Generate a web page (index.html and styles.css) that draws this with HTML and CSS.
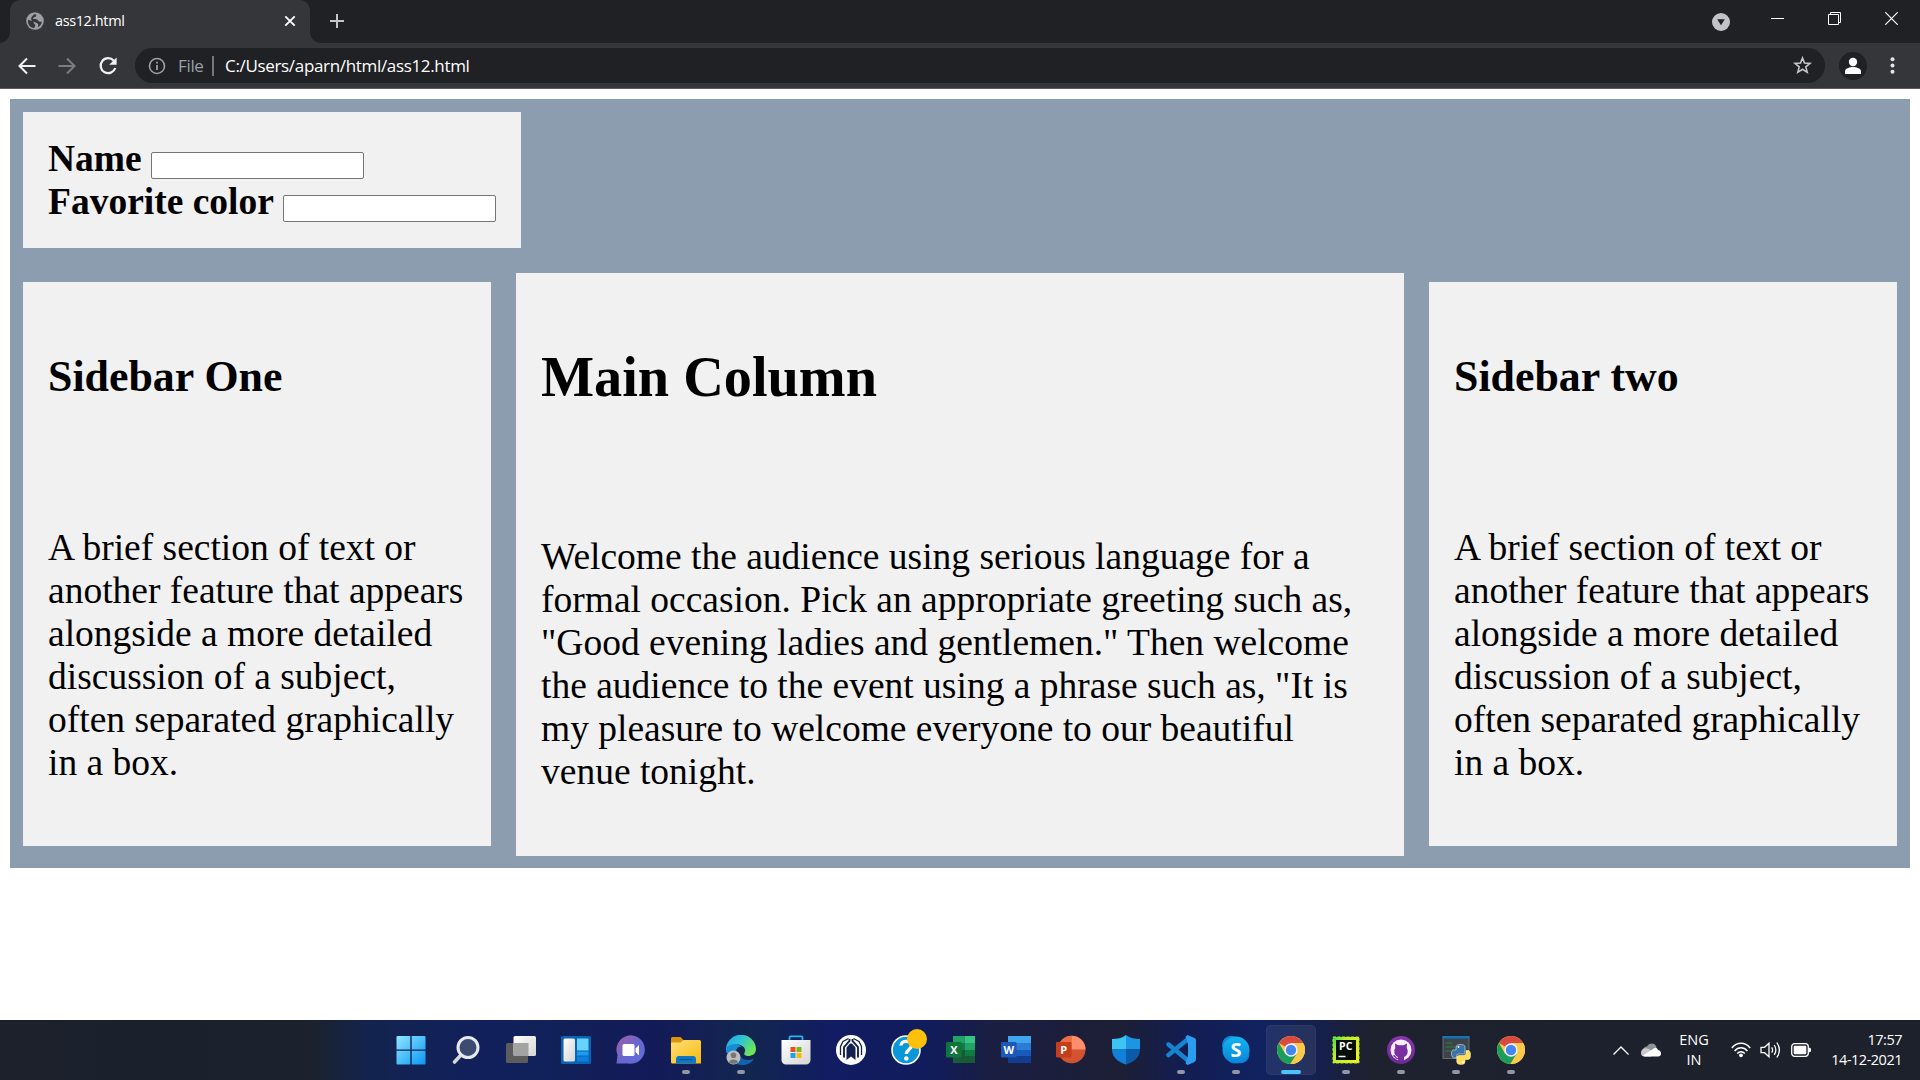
FILE: index.html
```html
<!DOCTYPE html>
<html lang="en">
<head>
<meta charset="utf-8">
<title>ass12.html</title>
<link rel="stylesheet" href="styles.css">
</head>
<body>
<svg width="0" height="0" class="defs" aria-hidden="true">
  <defs>
    <linearGradient id="win" x1="0" y1="0" x2="1" y2="1"><stop offset="0" stop-color="#8fe6ff"/><stop offset="1" stop-color="#0a97f5"/></linearGradient>
    <linearGradient id="silver" x1="0" y1="0" x2="1" y2="1"><stop offset="0" stop-color="#ffffff"/><stop offset="1" stop-color="#d4d4d4"/></linearGradient>
    <linearGradient id="chat" x1="0" y1="0" x2="1" y2="1"><stop offset="0" stop-color="#a2609f"/><stop offset=".5" stop-color="#6a66cf"/><stop offset="1" stop-color="#5b6fe0"/></linearGradient>
    <linearGradient id="folder" x1="0" y1="0" x2="1" y2="1"><stop offset="0" stop-color="#ffe07a"/><stop offset="1" stop-color="#f9b90c"/></linearGradient>
    <linearGradient id="edgeTop" x1="0" y1="0" x2="1" y2=".5"><stop offset="0" stop-color="#1fa3ea"/><stop offset=".5" stop-color="#2cc3d8"/><stop offset="1" stop-color="#6be658"/></linearGradient>
    <linearGradient id="skype" x1="0" y1="0" x2="0" y2="1"><stop offset="0" stop-color="#12b5ee"/><stop offset="1" stop-color="#0a84dc"/></linearGradient>
    <linearGradient id="pyc" x1="0" y1="0" x2="1" y2=".6"><stop offset="0" stop-color="#21e04f"/><stop offset=".35" stop-color="#b9ee2a"/><stop offset="1" stop-color="#eef020"/></linearGradient>
    <linearGradient id="hub" x1="0" y1="0" x2="0" y2="1"><stop offset="0" stop-color="#8a35b0"/><stop offset="1" stop-color="#6b2a92"/></linearGradient>
    <symbol id="chrome" viewBox="0 0 28 28">
      <circle cx="14" cy="14" r="14" fill="#fbc94a"/>
      <path d="M14 14 1.900 7A14 14 0 0 1 26.100 7H14Z" fill="#d8493f"/>
      <path d="M1.900 7A14 14 0 0 0 13.400 28L20 17.500 14 20 8 17.500Z" fill="#1b9e5c"/>
      <path d="M14 7H26.100A14 14 0 0 1 13.400 28L20.100 17.500 21 14Z" fill="#fbc94a"/>
      <circle cx="14" cy="14" r="6.700" fill="#f3f3f3"/>
      <circle cx="14" cy="14" r="5.200" fill="#4686f2"/>
    </symbol>
  </defs>
</svg>

<header class="browser">
  <div class="tabstrip">
    <div class="tab">
      <svg class="globe" width="18" height="18" viewBox="0 0 18 18"><circle cx="9" cy="9" r="8.800" fill="#9aa0a6"/><path d="M2 7.600C3.600 9.400 7.400 8 7.600 10.400C7.700 12 9.400 11.600 9.200 13.200L8.600 15.800C5 16.500 1.300 13 2 7.600ZM8.200 2.200C10 2 10.800 3 10 4.200 9 5.400 7 5 6.800 6.600 8.500 7.500 11 6.500 12 8.500 13 10 14.600 10 15.800 9.600 15.800 12 14 14.600 11.800 15.300L12.300 12.500C11.500 10.500 8.500 10.500 6.500 9 4.800 8 4.500 6 6 4.500Z" fill="#35363a"/></svg>
      <span class="tab-title">ass12.html</span>
      <svg class="tab-close" width="12" height="12" viewBox="0 0 12 12"><path d="M1.300 1.300 10.700 10.700M10.700 1.300 1.300 10.700" stroke="#fff" stroke-width="1.900"/></svg>
    </div>
    <svg class="new-tab" width="14" height="14" viewBox="0 0 14 14"><path d="M7 0V14M0 7H14" stroke="#c4c6ca" stroke-width="2"/></svg>
    <div class="window-controls">
      <svg width="18" height="18" viewBox="0 0 18 18" class="search-tabs"><circle cx="9" cy="9" r="9" fill="#c0c3c8"/><path d="M5.200 6.300H12.800L9 12.300Z" fill="#202124"/></svg>
      <svg width="13" height="13" viewBox="0 0 13 13"><path d="M0 6.500H13" stroke="#fff"/></svg>
      <svg width="13" height="13" viewBox="0 0 13 13"><path d="M.5 2.500H10.500V12.500H.5ZM2.500 2.500V.5H12.500V10.500H10.500" fill="none" stroke="#fff"/></svg>
      <svg width="13" height="13" viewBox="0 0 13 13"><path d="M.3.3 12.700 12.700M12.700.3.3 12.700" stroke="#fff" stroke-width="1.200"/></svg>
    </div>
  </div>
  <div class="toolbar">
    <svg class="nav" width="20" height="20" viewBox="0 0 20 20"><path d="M18.500 10H3M10 2.500 2.500 10 10 17.500" fill="none" stroke="#f1f1f1" stroke-width="2"/></svg>
    <svg class="nav" width="20" height="20" viewBox="0 0 20 20"><path d="M1.500 10H17M10 2.500 17.500 10 10 17.500" fill="none" stroke="#7c7d80" stroke-width="2"/></svg>
    <svg class="nav" width="20" height="20" viewBox="0 0 20 20"><path d="M15.800 4.700A7.500 7.500 0 1 0 17.300 12" fill="none" stroke="#f1f1f1" stroke-width="2.200"/><path d="M18.600 1.400V8.800H11.200Z" fill="#f1f1f1"/></svg>
    <div class="omnibox">
      <svg class="info" width="18" height="18" viewBox="0 0 18 18"><circle cx="9" cy="9" r="7.500" fill="none" stroke="#9aa0a6" stroke-width="1.600"/><path d="M9 8V13M9 4.700V6.600" stroke="#9aa0a6" stroke-width="1.800"/></svg>
      <span class="scheme">File</span>
      <span class="divider"></span>
      <span class="url">C:/Users/aparn/html/ass12.html</span>
      <svg class="star" width="19" height="19" viewBox="0 0 19 19"><path d="M9.500 2 11.500 7 17 7.400 12.800 10.900 14.200 16.300 9.500 13.300 4.800 16.300 6.200 10.900 2 7.400 7.500 7Z" fill="none" stroke="#c4c6ca" stroke-width="1.600"/></svg>
    </div>
    <svg class="avatar" width="28" height="28" viewBox="0 0 28 28"><circle cx="14" cy="14" r="14" fill="#202124"/><circle cx="14" cy="10" r="4.200" fill="#fff"/><path d="M6 22V19.500C6 16.500 10 15 14 15S22 16.500 22 19.500V22Z" fill="#fff"/></svg>
    <svg class="menu" width="5" height="17" viewBox="0 0 5 17"><g fill="#e4e5e7"><circle cx="2.500" cy="2.200" r="2"/><circle cx="2.500" cy="8.500" r="2"/><circle cx="2.500" cy="14.800" r="2"/></g></svg>
  </div>
</header>

<main class="viewport">
  <div class="container">
    <form class="box form">
      <div><label for="name">Name</label> <input id="name" class="field" type="text"></div>
      <div><label for="color">Favorite color</label> <input id="color" class="field" type="text"></div>
    </form>
    <div class="columns">
      <aside class="box sidebar">
        <h3>Sidebar One</h3>
        <br>
        <p>A brief section of text or another feature that appears alongside a more detailed discussion of a subject, often separated graphically in a box.</p>
      </aside>
      <section class="box main">
        <h2>Main Column</h2>
        <br>
        <p>Welcome the audience using serious language for a formal occasion. Pick an appropriate greeting such as, "Good evening ladies and gentlemen." Then welcome the audience to the event using a phrase such as, "It is my pleasure to welcome everyone to our beautiful venue tonight.</p>
      </section>
      <aside class="box sidebar">
        <h3>Sidebar two</h3>
        <br>
        <p>A brief section of text or another feature that appears alongside a more detailed discussion of a subject, often separated graphically in a box.</p>
      </aside>
    </div>
  </div>
</main>

<footer class="taskbar">
  <div class="apps">
    <div class="app"><svg width="30" height="30" viewBox="0 0 30 30"><path d="M.5 2A1 1 0 0 1 1.500 1H14.300V14.500H.5ZM15.700 1H28.500A1 1 0 0 1 29.500 2V14.500H15.700ZM.5 15.800H14.300V29.500H1.500A1 1 0 0 1 .5 28.500ZM15.700 15.800H29.500V28.500A1 1 0 0 1 28.500 29.500H15.700Z" fill="url(#win)"/></svg></div>
    <div class="app"><svg width="30" height="30" viewBox="0 0 30 30"><path d="M10 20 3.500 27" stroke="#d5d7d9" stroke-width="3.600" stroke-linecap="round"/><circle cx="17" cy="12.500" r="10" fill="#3d4b72" stroke="#e7e9eb" stroke-width="3"/></svg></div>
    <div class="app"><svg width="30" height="30" viewBox="0 0 30 30"><rect x="0" y="8" width="22" height="20" rx="1.500" fill="#5c5c5c"/><rect x="7.500" y="1" width="22.500" height="20" rx="1.500" fill="url(#silver)"/><path d="M7.500 8H22.500V21H9A1.500 1.500 0 0 1 7.500 19.500Z" fill="#a3a3a3"/></svg></div>
    <div class="app"><svg width="30" height="30" viewBox="0 0 30 30"><rect width="30" height="28" y="1" rx="1.500" fill="#0a64b4"/><rect x="2.500" y="3.500" width="11.500" height="23" rx="1.500" fill="url(#silver)"/><path d="M16 3.500H27.500V15.500H16Z" fill="#67d5fb"/><path d="M16 16.500H27.500V20.500H16Z" fill="#1c9df2"/><path d="M16 21.500H27.500V26.500H16Z" fill="#0a7fe2"/></svg></div>
    <div class="app"><svg width="30" height="30" viewBox="0 0 30 30"><path d="M.5 28.500 1.500 20A14.200 14.200 0 1 1 12 28.500Z" fill="url(#chat)"/><rect x="6.500" y="9" width="12" height="12" rx="1.500" fill="#fff"/><path d="M19.500 13.500 23 10V20.500L19.500 17Z" fill="#fff"/></svg></div>
    <div class="app running"><svg width="30" height="30" viewBox="0 0 30 30"><path d="M0 3.500A1.500 1.500 0 0 1 1.500 2H9.500L12.500 5V10H0Z" fill="#dc9408"/><path d="M0 7.500H9.500L12.500 5H28.500A1.500 1.500 0 0 1 30 6.500V28.500H1.500A1.500 1.500 0 0 1 0 27Z" fill="url(#folder)"/><path d="M5 28.500V24A3 3 0 0 1 8 21H22A3 3 0 0 1 25 24V28.500Z" fill="#0e78c6"/><path d="M8.500 24.500H21.500" stroke="#07508f" stroke-width="1.200"/></svg></div>
    <div class="app running"><svg width="30" height="30" viewBox="0 0 30 30"><path d="M1 12C-1 22 7 30 16 30 22 30 26 27.500 28 23.500 21 27 13 24 12 17Z" fill="#1263ad"/><path d="M0 15A15 14.800 0 0 1 30 14C30 19 26 21 22 21S17.500 19 19 16.500C20 12 15 9 10 9.500 5 10 1 13 0 17Z" fill="url(#edgeTop)"/><path d="M1 12C6 8 13 8 15.500 12 12 11 10 14 10 18 5 19 1 19 0 17Z" fill="#168bd6"/><circle cx="7.500" cy="22.500" r="7" fill="#bdbdbd"/><circle cx="7.500" cy="20.300" r="2.800" fill="#777"/><path d="M3 27.500C3 23.500 12 23.500 12 27.500 9.500 29.300 5.500 29.300 3 27.500Z" fill="#777"/></svg></div>
    <div class="app"><svg width="30" height="30" viewBox="0 0 30 30"><path d="M8.500 6V2.500A1.200 1.200 0 0 1 9.700 1.300H20.300A1.200 1.200 0 0 1 21.500 2.500V6" fill="none" stroke="#2bb2f0" stroke-width="1.800"/><path d="M.5 5H29.500V25A4.500 4.500 0 0 1 25 29.500H5A4.500 4.500 0 0 1 .5 25Z" fill="url(#silver)"/><path d="M9.500 12H14.500V17H9.500Z" fill="#e9501f"/><path d="M15.500 12H20.500V17H15.500Z" fill="#7db815"/><path d="M9.500 18H14.500V23H9.500Z" fill="#1ba3ea"/><path d="M15.500 18H20.500V23H15.500Z" fill="#fcb80c"/></svg></div>
    <div class="app"><svg width="30" height="30" viewBox="0 0 30 30"><circle cx="15" cy="15" r="15" fill="#fff"/><g fill="none" stroke="#15214f" stroke-width="1.300"><path d="M4.500 20V11.500L7 6.500 12.500 3.500M25.500 20V11.500L23 6.500 17.500 3.500"/><path d="M8 22.500V12L13.500 6V4M22 22.500V12L16.500 6V4" stroke-width="1.900"/></g><path d="M10.500 25V12.500L14 8.500H16L19.500 12.500V25L15 21.500Z" fill="#15214f"/></svg></div>
    <div class="app"><svg class="help" width="36" height="36" viewBox="0 0 36 36"><circle cx="15" cy="21" r="14" fill="#0a97da" stroke="#fff" stroke-width="1.600"/><path d="M10 16.500C10 11 20.500 11 20.500 16.500 20.500 20.500 15.300 20.500 15.300 25" fill="none" stroke="#fff" stroke-width="3.400"/><circle cx="15.300" cy="29.500" r="2.300" fill="#fff"/><circle cx="26" cy="10" r="10" fill="#fdc10c"/></svg></div>
    <div class="app"><svg width="30" height="30" viewBox="0 0 30 30"><path d="M7 1H18.500V8H7Z" fill="#21a366"/><path d="M18.500 1H29V8H18.500Z" fill="#35c481"/><path d="M7 8H18.500V15H7Z" fill="#107c41"/><path d="M18.500 8H29V15H18.500Z" fill="#21a366"/><path d="M7 15H18.500V28H7Z" fill="#185c37"/><path d="M18.500 15H29V21H18.500Z" fill="#107c41"/><path d="M18 21H29V28H18Z" fill="#185c37"/><rect y="7" width="15.500" height="15.500" rx="1" fill="#11743d"/><text x="7.800" y="18.800" class="glyph">X</text></svg></div>
    <div class="app"><svg width="30" height="30" viewBox="0 0 30 30"><path d="M7 1H30V8H7Z" fill="#41a5ee"/><path d="M7 8H30V15H7Z" fill="#2b7cd3"/><path d="M7 15H30V21.500H7Z" fill="#185abd"/><path d="M7 21.500H30V28H7Z" fill="#103f91"/><rect y="7" width="15.500" height="15.500" rx="1" fill="#1b58b8"/><text x="7.800" y="18.800" class="glyph">W</text></svg></div>
    <div class="app"><svg width="30" height="30" viewBox="0 0 30 30"><circle cx="15.700" cy="14.500" r="13.800" fill="#d35230"/><path d="M1.900 14.500A13.800 13.800 0 0 1 15.700 .7V14.500Z" fill="#ed6c47"/><path d="M15.700 .7A13.800 13.800 0 0 1 29.500 14.500H15.700Z" fill="#ff8f6b"/><rect y="7" width="15.500" height="15.500" rx="1" fill="#c43e1c"/><text x="7.800" y="18.800" class="glyph">P</text></svg></div>
    <div class="app"><svg width="30" height="30" viewBox="0 0 30 30"><path d="M15 0C11 3.200 6 4 1 4V14.500H15Z" fill="#3cc4f3"/><path d="M15 0C19 3.200 24 4 29 4V14.500H15Z" fill="#1b96e4"/><path d="M1 14.500C1 22 7 27 15 29.500V14.500Z" fill="#1180d8"/><path d="M29 14.500C29 22 23 27 15 29.500V14.500Z" fill="#0b5ba9"/></svg></div>
    <div class="app running"><svg width="30" height="30" viewBox="0 0 30 30"><path d="M2.500 20 22 4M2.500 9.500 22 25.500" stroke="#1583cf" stroke-width="4.600" stroke-linecap="round"/><path d="M21.500 0 28.500 3A2.500 2.500 0 0 1 30 5.200V24.800A2.500 2.500 0 0 1 28.500 27L21.500 30 19.500 28.500 22 21V9L19.500 1.500Z" fill="#2a9df0"/></svg></div>
    <div class="app running"><svg width="30" height="30" viewBox="0 0 30 30"><circle cx="10" cy="9.800" r="9" fill="#0d86d8"/><circle cx="20" cy="20" r="8.300" fill="#0b7fd6"/><circle cx="15" cy="15" r="13.500" fill="url(#skype)"/><text x="15" y="22" class="skype-s">S</text></svg></div>
    <div class="app running active"><svg width="28" height="28"><use href="#chrome"/></svg></div>
    <div class="app running"><svg width="28" height="28" viewBox="0 0 28 28"><rect x="1" y="1" width="26" height="26" fill="url(#pyc)" stroke="#b7ee2a" stroke-dasharray="3 1.500"/><rect x="4" y="4" width="20" height="20" fill="#060c06"/><text x="13.700" y="14.200" class="pc">PC</text><path d="M6.500 20.500H13.500" stroke="#fff" stroke-width="1.500"/></svg></div>
    <div class="app running"><svg width="28" height="28" viewBox="0 0 28 28"><circle cx="14" cy="14" r="14" fill="url(#hub)"/><circle cx="14" cy="14" r="10.500" fill="#f6effa"/><path d="M11 25V21C6.500 19.500 6.800 14 8.300 12L8 7.500 11.500 9.200H16.500L20 7.500 19.700 12C21.200 14 21.500 19.500 17 21V25Z" fill="#7a2fa0"/><path d="M11 22.500C8.500 23 8.500 20 6.500 19.500" fill="none" stroke="#7a2fa0" stroke-width="1.400"/></svg></div>
    <div class="app running"><svg width="30" height="30" viewBox="0 0 30 30"><rect x="2" y="1.500" width="26" height="22" fill="#3d4348" stroke="#777d82" stroke-width=".8"/><path d="M1.700 1.200H28.300V3.500H1.700Z" fill="#0b75bd"/><path d="M4.500 8H11M4.500 12H14M4.500 16H10" stroke="#23853b" stroke-width="1.200"/><g stroke="#fff" stroke-width=".5"><path d="M15 15V12Q15 9.500 19.500 9.500T24 12V17Q24 19 22 19H17.500Q15.500 19 15.500 21V23H13.500Q10.500 23 10.500 18.500T13.500 15Z" fill="#3974a8"/><path d="M25 15.500H27Q29.500 15.500 29.500 20T27 24.500H24V27Q24 29.500 20 29.500T15.800 27V22.500Q15.800 20.500 18 20.500H22Q25 20.500 25 18Z" fill="#ffdc55"/></g><circle cx="17.500" cy="12" r=".9" fill="#fff"/><circle cx="22" cy="27" r=".9" fill="#fff"/></svg></div>
    <div class="app running"><svg width="28" height="28"><use href="#chrome"/></svg></div>
  </div>
  <div class="tray">
    <svg class="chevron" width="16" height="9" viewBox="0 0 16 9"><path d="M.5 8.500 8 1 15.500 8.500" fill="none" stroke="#fff" stroke-width="1.300"/></svg>
    <svg class="cloud" width="20" height="14" viewBox="0 0 20 14"><path d="M2 9C1 5 5 3 6 3.500 8-.5 14-.5 15.500 4L14 9Z" fill="#8f9295"/><path d="M0 10C0 6 4 4 7.500 6L14 9 10 13.500H3.500A3.500 3.500 0 0 1 0 10Z" fill="#c9cacb"/><path d="M3.500 13.500 2 12.500 12 6C14 4 16 4.500 17 7 19.500 7.500 20 9 20 10.500A3 3 0 0 1 17 13.500Z" fill="#fff"/></svg>
    <div class="lang">ENG<br>IN</div>
    <svg class="wifi" width="20" height="16" viewBox="0 0 20 16"><g fill="none" stroke="#fff" stroke-width="1.500"><path d="M.8 6C6-.3 14-.3 19.200 6M3.600 8.900C7.200 4.600 12.800 4.600 16.400 8.900M6.200 11.600C8.400 9 11.600 9 13.800 11.600"/></g><circle cx="10" cy="13.300" r="1.900" fill="#fff"/></svg>
    <svg class="volume" width="21" height="18" viewBox="0 0 21 18"><g fill="none" stroke="#fff" stroke-width="1.300"><path d="M1 6.300H4.500L9 2.300V15.700L4.500 11.700H1Z"/><path d="M11.700 6.300Q13.500 9 11.700 11.700M14.200 4Q17.500 9 14.200 14M16.800 1.500Q22 9 16.800 16.500"/></g></svg>
    <svg class="battery" width="20" height="14" viewBox="0 0 20 14"><rect x=".7" y=".7" width="16.600" height="12.600" rx="3" fill="none" stroke="#fff" stroke-width="1.300"/><rect x="2.700" y="2.700" width="12.600" height="8.600" rx="1" fill="#fff"/><path d="M18 4.500 20 5.500V8.500L18 9.500Z" fill="#fff"/></svg>
    <div class="clock">17:57<br>14-12-2021</div>
  </div>
</footer>
</body>
</html>
```

FILE: styles.css
```css
* { box-sizing: border-box; }
body {
  margin: 0;
  width: 1920px;
  height: 1080px;
  display: flex;
  flex-direction: column;
  overflow: hidden;
  background: #fff;
  font-family: "Liberation Serif", "Times New Roman", serif;
}
svg { display: block; flex: none; }
.defs { position: absolute; }

/* Browser chrome */
.browser, .taskbar { font-family: "Open Sans", "Noto Sans", sans-serif; color: #fff; }
.browser { flex: none; height: 89px; background: #35363a; border-bottom: 1px solid #5b5c5f; }
.tabstrip { height: 43px; display: flex; align-items: center; background: #202124; padding-left: 10px; }
.tab {
  position: relative;
  width: 300px;
  height: 43px;
  display: flex;
  align-items: center;
  padding: 0 14px 1px 16px;
  background: #35363a;
  border-radius: 10px 10px 0 0;
}
.tab::before, .tab::after { content: ""; position: absolute; bottom: 0; width: 10px; height: 10px; }
.tab::before { left: -10px; background: radial-gradient(circle at 0 0, transparent 9.5px, #35363a 10px); }
.tab::after { right: -10px; background: radial-gradient(circle at 100% 0, transparent 9.5px, #35363a 10px); }
.tab-title { margin-left: 11px; font-size: 14.5px; line-height: 20px; letter-spacing: -.4px; }
.tab-close { margin-left: auto; }
.new-tab { margin: -1px 0 0 20px; }
.window-controls { margin-left: auto; display: flex; align-items: center; padding: 0 22px 6px 0; gap: 44px; }
.search-tabs { margin: 7px -3px 0 0; }
.toolbar { height: 45px; display: flex; align-items: center; padding: 0 25px 0 17px; }
.nav { margin-right: 20px; }
.nav + .nav + .nav { margin-left: 1px; margin-right: 19px; }
.omnibox {
  width: 1690px;
  height: 35px;
  margin-left: -2px;
  display: flex;
  align-items: center;
  padding: 0 13px;
  background: #202124;
  border-radius: 18px;
  font-size: 17px;
  line-height: 24px;
  letter-spacing: -.33px;
}
.scheme { margin-left: 12px; color: #9aa0a6; width: 26px; }
.divider { width: 2px; height: 20px; margin: 0 11px 0 8px; background: #75777b; }
.star { margin-left: auto; }
.avatar { margin-left: 14px; }
.menu { margin-left: auto; }

/* Page content */
.viewport { flex: 1; padding: 10px; font-size: 37.5px; line-height: 43px; color: #000; }
.container { height: 769px; background: #8d9db0; padding: 13px; }
.box { background: #f1f1f1; padding: 25px; }
.form { width: 498px; height: 136px; font-weight: bold; white-space: nowrap; }
.form div { height: 43px; }
.field {
  width: 213px;
  height: 27px;
  border: 1px solid #767676;
  border-radius: 2px;
  background: #fff;
  vertical-align: 1px;
  padding: 1px 2px;
  font: 16.67px "Liberation Sans", Arial, sans-serif;
}
.columns { display: flex; align-items: center; gap: 25px; margin-top: 25px; }
.sidebar { width: 468px; height: 564px; margin-bottom: 1px; padding-top: 25.5px; }
.main { width: 888px; height: 583px; }
h2, h3 { font-weight: bold; }
h2 { font-size: 56.25px; line-height: 64px; margin: 46.7px 0 45.7px; }
h3 { font-size: 43.875px; line-height: 50px; margin: 43.875px 0; }
p { margin: 37.5px 0; }

/* Taskbar */
.taskbar {
  flex: none;
  height: 60px;
  display: flex;
  padding-left: 383px;
  background: linear-gradient(90deg, #1c212c 0, #1b222d 310px, #13234f 370px, #11205c 480px, #112158 560px, #131a58 650px, #12264f 750px, #111c62 830px, #111c5c 930px, #1a1e42 990px, #1d1f35 1120px, #131d50 1180px, #102260 1260px, #15204c 1320px, #1e212e 1370px, #1c212b 1920px);
}
.apps { display: flex; }
.app { position: relative; width: 55px; height: 60px; display: flex; align-items: center; justify-content: center; }
.running::after {
  content: "";
  position: absolute;
  left: 24px;
  top: 50px;
  width: 8px;
  height: 4px;
  border-radius: 2px;
  background: #9295a5;
}
.active::before { content: ""; position: absolute; inset: 5px 2px 5px 3px; border-radius: 5px; background: rgba(255, 255, 255, .08); border: 1px solid rgba(255, 255, 255, .04); }
.active svg { position: relative; }
.active::after { left: 18px; width: 20px; background: #4cc2ff; }
.help { margin: -6px 0 0 6px; }
.glyph { font: bold 11px "Open Sans", sans-serif; fill: #fff; text-anchor: middle; }
.skype-s { font: bold 20px "Open Sans", sans-serif; fill: #fff; text-anchor: middle; }
.pc { font: bold 10.5px "Open Sans", sans-serif; fill: #fff; text-anchor: middle; }
.tray { flex: 1; display: flex; align-items: center; padding-right: 18px; font-size: 14.5px; line-height: 20px; }
.chevron { margin-left: 75px; }
.cloud { margin-left: 12px; }
.lang { width: 40px; margin-left: 13px; text-align: center; }
.wifi { margin-left: 17px; }
.volume { margin-left: 9px; }
.battery { margin-left: 10px; }
.clock { margin-left: auto; text-align: right; white-space: nowrap; letter-spacing: -.5px; }
```
